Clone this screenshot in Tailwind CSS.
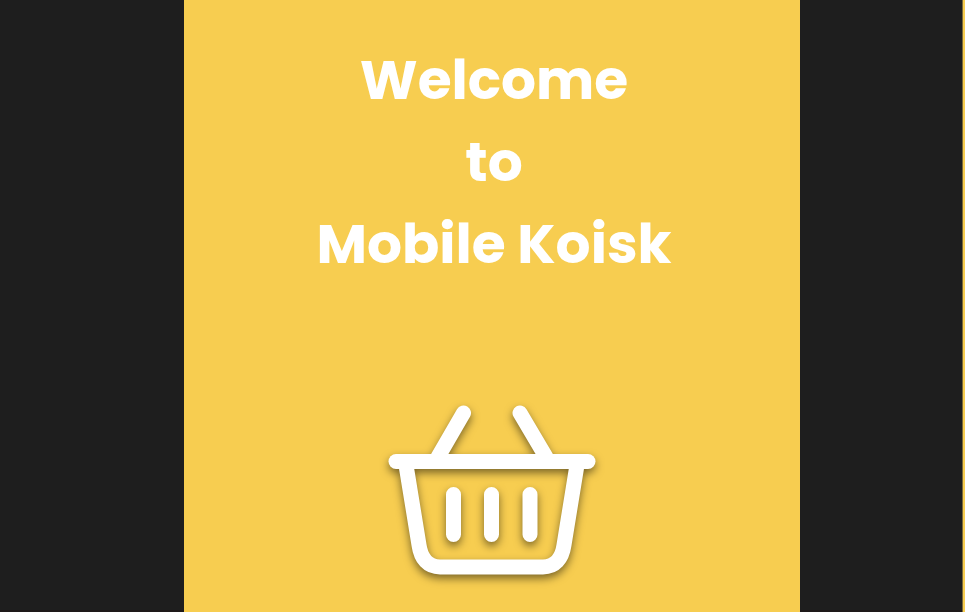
<!DOCTYPE html>
<html lang="en">
<head>
<meta charset="utf-8">
<meta name="viewport" content="width=device-width, initial-scale=1">
<title>Mobile Koisk</title>
<script src="https://cdn.jsdelivr.net/npm/@tailwindcss/browser@4"></script>
</head>
<body class="bg-[#1e1e1e]">
<div class="grid min-h-screen grid-cols-[184fr_616fr_162fr_3fr]">
  <div class="border-b-2 border-[#1e1919]"></div>
  <main class="flex flex-col items-center bg-[#f7cd50] pt-[39px]">
    <h1 class="pl-1 text-center font-['Poppins','Inter',sans-serif] text-[55px] leading-[82px] font-bold text-white">Welcome<br>to<br>Mobile Koisk</h1>
    <svg class="mt-28 h-auto w-56 overflow-visible drop-shadow-[0_4px_4px_rgb(0_0_0/0.5)]" viewBox="0 2 224 190" fill="none" stroke="#fff" stroke-width="15" stroke-linecap="round" stroke-linejoin="round" role="img" aria-label="Shopping basket">
      <path d="M83.500 18L58 62M140 18L166 62"/>
      <path d="M16 66.500H208"/>
      <path d="M26 70L39 150C41 164 48 172 60 172H163C175 172 182 164 184 150L197 70"/>
      <path d="M73.500 99.500V139.500M111.500 99.500V139.500M150 99.500V139.500"/>
    </svg>
  </main>
  <div class="border-b-2 border-[#1e1919]"></div>
  <div class="border-l border-[#7a6838] bg-[#f7cd50]"></div>
</div>
</body>
</html>
